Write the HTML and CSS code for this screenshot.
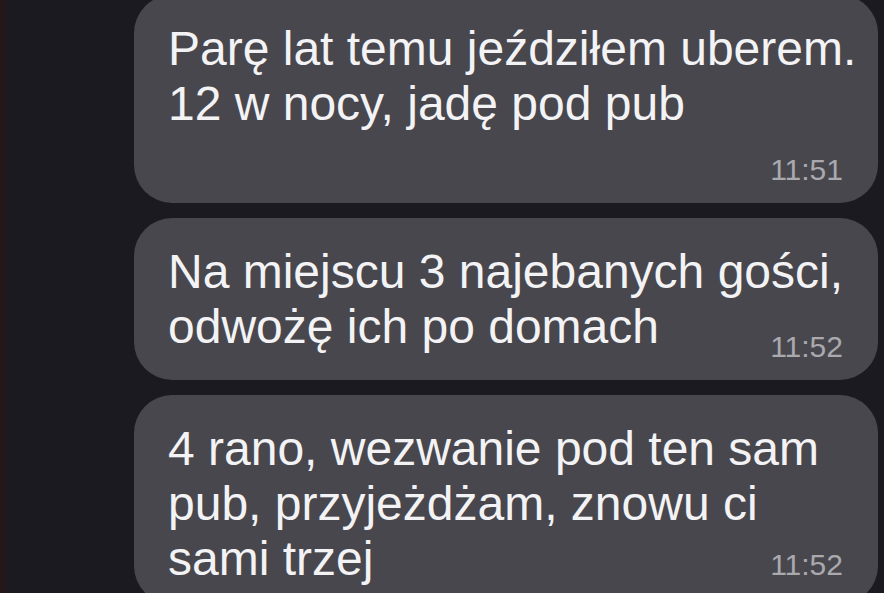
FILE: index.html
```html
<!DOCTYPE html>
<html lang="pl">
<head>
<meta charset="utf-8">
<title>Czat</title>
<link rel="stylesheet" href="styles.css">
</head>
<body>
<main class="chat">
  <div class="bubble">
    <div class="line">Parę lat temu jeździłem uberem.</div>
    <div class="line">12 w nocy, jadę pod pub</div>
    <div class="meta-row"><span class="time">11:51</span></div>
  </div>
  <div class="bubble">
    <div class="line">Na miejscu 3 najebanych gości,</div>
    <div class="line last">
      <span>odwożę ich po domach</span>
      <span class="time time-low">11:52</span>
    </div>
  </div>
  <div class="bubble">
    <div class="line">4 rano, wezwanie pod ten sam</div>
    <div class="line">pub, przyjeżdżam, znowu ci</div>
    <div class="line last">
      <span>sami trzej</span>
      <span class="time time-mid">11:52</span>
    </div>
  </div>
</main>
</body>
</html>
```

FILE: styles.css
```css
html, body {
  margin: 0;
  padding: 0;
  height: 100%;
  overflow: hidden;
  background: #1b1a21;
}

body {
  font-family: "Liberation Sans", Arial, sans-serif;
  border-left: 5px solid #261619;
  box-sizing: border-box;
}

.chat {
  display: flex;
  flex-direction: column;
  gap: 15px;
  padding: 0 6px 0 129px;
  margin-top: -5px;
}

.bubble {
  background: #48474d;
  border-radius: 38px;
  padding: 26px 35px 18px 34px;
  color: #f3f3f5;
}

.line {
  font-size: 48px;
  line-height: 55px;
  white-space: nowrap;
}

.last {
  display: flex;
  justify-content: space-between;
  align-items: flex-start;
}

.meta-row {
  display: flex;
  justify-content: flex-end;
  margin-top: 24px;
}

.time {
  font-size: 30px;
  line-height: 30px;
  color: #a9a9ae;
}

.time-low {
  margin-top: 33px;
}

.time-mid {
  margin-top: 19px;
}
```
